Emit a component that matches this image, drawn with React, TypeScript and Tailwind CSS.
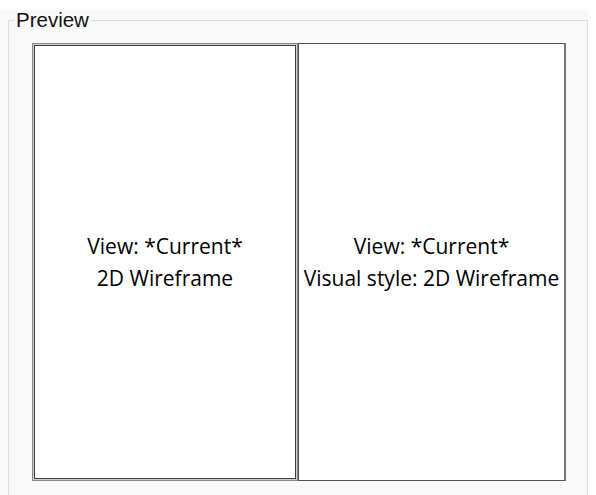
import React from 'react';

const PaneText: React.FC<{ lines: string[] }> = ({ lines }) => (
  <div className="flex flex-col items-center text-center font-['Open_Sans',sans-serif] text-[21px] leading-[32px] text-black whitespace-nowrap">
    {lines.map((l, i) => (
      <span key={i}>{l}</span>
    ))}
  </div>
);

const App: React.FC = () => {
  return (
    <div className="w-[596px] h-[495px] bg-white overflow-hidden font-['Liberation_Sans',sans-serif]">
      <div className="mt-[10px] w-[588px] h-[485px] bg-[#f9f9f9] pl-2">
        <fieldset className="w-[580px] h-[520px] border border-[#dcdcdc]">
          <legend className="ml-[5px] px-[2px] text-[20.5px] leading-[20px] text-[#111]">Preview</legend>
          <div className="flex ml-[23px] mt-[13px] h-[438px]">
            {/* left viewport: sunken double frame */}
            <div className="w-[266px] h-full border border-[#8a8a8a]">
              <div className="h-full border border-[#cfcfcf]">
                <div className="h-full border border-[#3f3f3f] bg-white flex items-center justify-center">
                  <PaneText lines={['View: *Current*', '2D Wireframe']} />
                </div>
              </div>
            </div>
            {/* right viewport */}
            <div className="w-[268px] h-full border border-[#505050] border-r-2 border-r-[#777] bg-white flex items-center justify-center">
              <PaneText lines={['View: *Current*', 'Visual style: 2D Wireframe']} />
            </div>
          </div>
        </fieldset>
      </div>
    </div>
  );
};

export default App;
